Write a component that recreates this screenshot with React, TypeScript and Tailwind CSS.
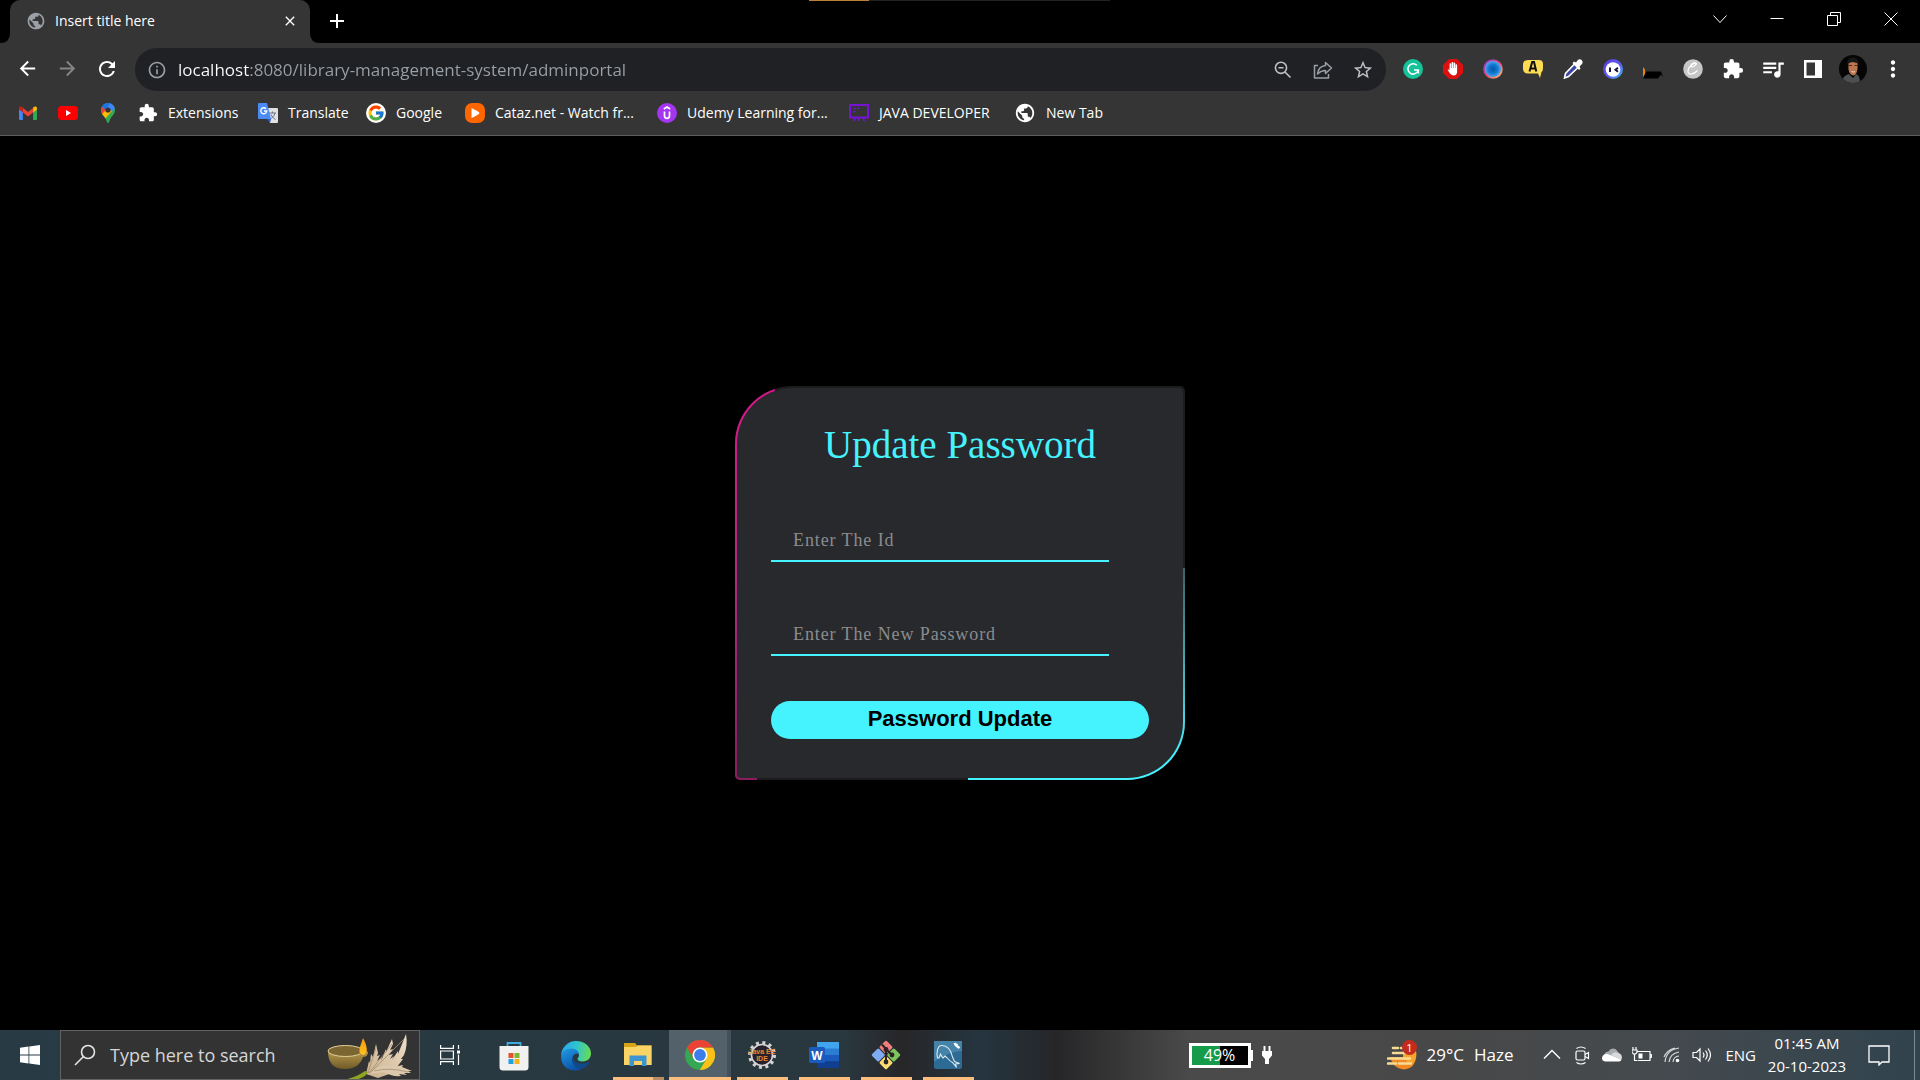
import React from "react";
import { FcGoogle } from "react-icons/fc";
import {
  MdAdd,
  MdArrowBack,
  MdArrowForward,
  MdClose,
  MdExtension,
  MdMoreVert,
  MdOutlineInfo,
  MdPublic,
  MdQueueMusic,
  MdRefresh,
  MdStarBorder,
} from "react-icons/md";

type IconItem = { name: string; icon: React.ReactNode };

/* ---------- browser icons ---------- */

const Gmail = () => (
  <svg viewBox="0 0 20 20" className="size-5">
    <path d="M1 5v11.2q0 .8.9.8h3V8.800z" fill="#4285f4" />
    <path d="M19 5v11.200q0 .8-.9.8h-3V8.800z" fill="#34a853" />
    <path d="M4.900 5 10 9l5.100-4v4.500L10 13.500 4.900 9.500z" fill="#ea4335" />
    <path d="M1 5.500C1 3 3.300 2.900 4.900 4.500v5L1 6.500z" fill="#c5221f" />
    <path d="M19 5.500c0-2.500-2.300-2.600-3.900-1v5L19 6.500z" fill="#fbbc04" />
  </svg>
);

const YouTube = () => (
  <svg viewBox="0 0 20 20" className="size-5">
    <rect y="3" width="20" height="14" rx="3.500" fill="#f00" />
    <path d="M8 7v6l5-3z" fill="#fff" />
  </svg>
);

const Maps = () => (
  <svg viewBox="0 0 20 20" className="size-5">
    <clipPath id="pin">
      <path d="M10 0a7 7 0 0 1 7 7c0 4.500-3.500 5.500-5 9.500-.8 2-1 3.500-2 3.500s-1.200-1.500-2-3.500C6.500 12.500 3 11.500 3 7a7 7 0 0 1 7-7" />
    </clipPath>
    <g clipPath="url(#pin)">
      <path d="M0 0h20v20H0z" fill="#34a853" />
      <path d="M0 4 8 8l8-9H0z" fill="#1a73e8" />
      <path d="M8 6 13-1h7v5l-9 6z" fill="#4285f4" />
      <path d="m0 1 8 6-5 6H0z" fill="#ea4335" />
      <path d="m2 13 7-7 5 2-8 9z" fill="#fbbc04" />
    </g>
    <circle cx="10" cy="7" r="2.600" fill="#333" />
  </svg>
);

const Translate = () => (
  <svg viewBox="0 0 20 20" className="size-5">
    <path d="M8 5h11q1 0 1 1v13q0 1-1 1h-7z" fill="#dfe1e5" />
    <path d="M11 10h7M14.500 8.500V10M17 10c-.5 3-3 5-5 6M13 11.500c1 2.500 3 4 4.500 5" stroke="#6b7480" fill="none" />
    <path d="M1 0h8l4 16H1q-1 0-1-1V1q0-1 1-1" fill="#4c8bf5" />
    <path d="M8 5.700A3 3 0 1 0 8.800 8H6" stroke="#fff" strokeWidth="1.300" fill="none" />
    <path d="m9 16 3 4 1-4z" fill="#2c5cc5" />
  </svg>
);

const Cataz = () => (
  <svg viewBox="0 0 20 20" className="size-5">
    <rect width="20" height="20" rx="7" fill="#f60" />
    <path d="M6.500 5v10q7.500-3.500 8-5-.5-1.500-8-5" fill="#fff" />
  </svg>
);

const Udemy = () => (
  <svg viewBox="0 0 20 20" className="size-5">
    <circle cx="10" cy="10" r="10" fill="#a435f0" />
    <path d="M6.800 6 10 4l3.200 2M7.500 8.500v4.300q0 2.500 2.500 2.500t2.500-2.500V8.500" stroke="#fff" strokeWidth="1.700" fill="none" />
  </svg>
);

const JavaDev = () => (
  <svg viewBox="0 0 20 20" className="size-5" fill="none" stroke="#7514d6">
    <path d="M1 2h18v12.500H1z" strokeWidth="2" />
    <path d="M4.500 5.500h2M8 5.500h2M4.500 8.500h2M6 15l-1.500 3M10 15v3M14 15l1.500 3" strokeWidth="1.600" />
  </svg>
);

const ZoomOut = () => (
  <svg viewBox="0 0 20 20" className="size-5" fill="none" stroke="#bdc1c6" strokeWidth="1.600">
    <circle cx="8" cy="7.800" r="5.600" />
    <path d="M12 12l5.500 5.500M5.500 7.800h5" />
  </svg>
);

const Share = () => (
  <svg viewBox="0 0 20 20" className="size-5" fill="none" stroke="#9aa0a6" strokeWidth="1.500" strokeLinejoin="round">
    <path d="M5 5.500H1.500V18h14v-4" />
    <path d="M12.500 2.500 18.500 8l-6 5.500v-3C9 10.500 7 11.500 4.500 14c.5-5 3.500-8 8-8.500z" />
  </svg>
);

const extensions: IconItem[] = [
  {
    name: "Grammarly",
    icon: (
      <svg viewBox="0 0 20 20" className="size-5">
        <circle cx="10" cy="10" r="10" fill="#15c39a" />
        <path d="M13.800 6.200A5.200 5.200 0 1 0 14.900 12M11 11h4.300v3.500" stroke="#fff" strokeWidth="1.600" fill="none" />
      </svg>
    ),
  },
  {
    name: "AdBlock",
    icon: (
      <svg viewBox="0 0 20 20" className="size-5">
        <path d="M6 0h8l6 6v8l-6 6H6l-6-6V6z" fill="#dc1010" />
        <path d="M7.400 10V5M9.400 9V3.800M11.400 9V4.200M13.300 10V6" stroke="#fff" strokeWidth="1.600" strokeLinecap="round" />
        <path d="M6.600 9h7.500v3.500q0 4-3.500 4-2 0-3.300-1.800L4.600 11q.8-1.300 2 .3z" fill="#fff" />
      </svg>
    ),
  },
  {
    name: "Color ring",
    icon: (
      <svg viewBox="0 0 20 20" className="size-5">
        <defs>
          <linearGradient id="ring" x1="0" y1="0" x2="1" y2="1">
            <stop stopColor="#7a45e8" />
            <stop offset=".5" stopColor="#ee3f76" />
            <stop offset="1" stopColor="#ffd25e" />
          </linearGradient>
          <radialGradient id="lens">
            <stop stopColor="#0757a8" />
            <stop offset=".6" stopColor="#127bd3" />
            <stop offset="1" stopColor="#55a9ef" />
          </radialGradient>
        </defs>
        <circle cx="10" cy="10" r="9.800" fill="url(#ring)" />
        <circle cx="10" cy="10" r="8" fill="url(#lens)" />
      </svg>
    ),
  },
  {
    name: "Annotate",
    icon: (
      <svg viewBox="0 0 20 20" className="size-5">
        <path d="M5 1h11q4 0 4 4v4q0 3-1.500 4L17 19l-2-4.500H5q-5 0-5-5V6q0-5 5-5" fill="#fbdc52" />
        <path d="m6.500 12.500 2.700-9.500h1.800l2.300 9.500M7.800 9.600h4.400" stroke="#111" strokeWidth="2" fill="none" />
      </svg>
    ),
  },
  {
    name: "Color picker",
    icon: (
      <svg viewBox="0 0 20 20" className="size-5">
        <path d="M11.500 5 2.500 14.500 1.500 19l4-1.500L15 8.500z" fill="#3b46a8" stroke="#fff" strokeWidth="1.600" />
        <path d="m9.500 4 1.500-1.500 2 1L15 .8q2.500-1.300 4 .8 1.300 1.800 0 3.400L16.500 7.500l1 2L16 11z" fill="#fff" />
      </svg>
    ),
  },
  {
    name: "Assistant",
    icon: (
      <svg viewBox="0 0 20 20" className="size-5">
        <defs>
          <linearGradient id="bot" x1="0" y1="0" x2="1" y2="1">
            <stop stopColor="#5b35d5" />
            <stop offset=".6" stopColor="#5a62f3" />
            <stop offset="1" stopColor="#3fd0f0" />
          </linearGradient>
        </defs>
        <circle cx="10" cy="10" r="10" fill="url(#bot)" />
        <circle cx="10" cy="10.500" r="7.300" fill="#fff" />
        <path d="M7 8.500v4.500M15 8.800l-2.500 2 2.500 2" stroke="#151540" strokeWidth="2" fill="none" />
      </svg>
    ),
  },
  {
    name: "Cap",
    icon: (
      <svg viewBox="0 0 20 20" className="size-5">
        <path d="m0 8 2 2.500v4L0 19z" fill="#e8870f" />
        <path d="M0 19 3.500 12.500H18l2.500 6-2.500-3-3 4H1z" fill="#000" />
      </svg>
    ),
  },
  {
    name: "Script C",
    icon: (
      <svg viewBox="0 0 20 20" className="size-5">
        <circle cx="10" cy="10" r="9.800" fill="#c6c6c6" />
        <path d="M8 7.500C10 9 13 6 13.500 4.500 12 3.500 5 7 5 12.500c0 4 6 3 9.500-1M8 7.500c-1-1 1-3.500 4.500-3.800" stroke="#fff" strokeWidth="1.200" fill="none" />
      </svg>
    ),
  },
  { name: "Extensions", icon: <MdExtension className="size-[22px] text-white" /> },
  { name: "Media controls", icon: <MdQueueMusic className="size-[26px] text-white" /> },
  {
    name: "Side panel",
    icon: (
      <svg viewBox="0 0 20 20" className="size-5">
        <path d="M1 1h18v18H1zm2.500 2.500v13H12v-13z" fill="#fff" fillRule="evenodd" />
      </svg>
    ),
  },
  {
    name: "Profile",
    icon: (
      <svg viewBox="0 0 28 28" className="size-7">
        <clipPath id="face">
          <circle cx="14" cy="14" r="14" />
        </clipPath>
        <g clipPath="url(#face)">
          <path d="M0 0h28v28H0z" fill="#050505" />
          <path d="M3 28c0-5 3-8 7-9l4 4 3-4c3 1 4 4 4 9z" fill="#4c5050" />
          <path d="M9.500 8q4.500-3 9 0v6q-1 6-4 6.500-4-.5-5-6z" fill="#b9764f" />
          <path d="M8.500 11Q7 3 14 2.500q7 .5 5.500 8.500l-1-3-5-1-4 1z" fill="#17181a" />
          <path d="M10 10.500h3M15.500 10.500h3" stroke="#4a2b1c" strokeWidth="1.200" />
          <path d="M12.500 16.500q2 1.200 3.500 0" stroke="#f3ddd0" fill="none" />
        </g>
      </svg>
    ),
  },
  { name: "Menu", icon: <MdMoreVert className="size-[26px] text-white" /> },
];

const bookmarks = [
  { icon: <Gmail />, name: "Gmail" },
  { icon: <YouTube />, name: "YouTube" },
  { icon: <Maps />, name: "Maps" },
  { icon: <MdExtension className="size-5 text-white" />, label: "Extensions", width: "w-[70px]" },
  { icon: <Translate />, label: "Translate", width: "w-[58px]" },
  { icon: <FcGoogle className="size-5 rounded-full bg-white p-px" />, label: "Google", width: "w-[49px]" },
  { icon: <Cataz />, label: "Cataz.net - Watch fr...", width: "w-[142px]" },
  { icon: <Udemy />, label: "Udemy Learning for...", width: "w-[142px]" },
  { icon: <JavaDev />, label: "JAVA DEVELOPER", width: "w-[115px]" },
  { icon: <MdPublic className="size-[22px] text-white" />, label: "New Tab", width: "w-[57px]" },
];

const windowControls: IconItem[] = [
  { name: "Search tabs", icon: <path d="m1.500 4.500 6.500 7 6.500-7" /> },
  { name: "Minimize", icon: <path d="M1.500 7.500h13" /> },
  { name: "Restore", icon: <path d="M1.500 4.500h10v10h-10zM4.500 4.500v-3h10v10h-3" /> },
  { name: "Close", icon: <path d="m1.500 1.500 13 13m0-13-13 13" /> },
];

/* ---------- taskbar icons ---------- */

const Store = () => (
  <svg viewBox="0 0 30 30" className="size-[30px]">
    <path d="M8.500 7V2h13v5" fill="none" stroke="#3fa9de" strokeWidth="1.800" />
    <path d="M.500 5h29v21q0 3.500-3.500 3.500H4Q.5 29.500.5 26z" fill="#f1f1f1" />
    <path d="M9.500 12H14.500v5h-5z" fill="#e8502a" />
    <path d="M15.500 12h5v5h-5z" fill="#7db928" />
    <path d="M9.500 18h5v5h-5z" fill="#22a0e6" />
    <path d="M15.500 18h5v5h-5z" fill="#f8b31c" />
  </svg>
);

const Edge = () => (
  <svg viewBox="0 0 30 30" className="size-[30px]">
    <defs>
      <linearGradient id="edgeA" x1="0" y1=".3" x2="1" y2=".4">
        <stop stopColor="#2aa5e8" />
        <stop offset=".5" stopColor="#2fc3cf" />
        <stop offset="1" stopColor="#66dd55" />
      </linearGradient>
      <linearGradient id="edgeB" x1="0" y1="0" x2=".5" y2="1">
        <stop stopColor="#1f9ae6" />
        <stop offset="1" stopColor="#0b54a8" />
      </linearGradient>
    </defs>
    <path d="M0 15A15 15 0 0 1 15 0c9 0 15 6 15 12.500 0 5-4 8-8.500 8-3.500 0-5-1.500-5-2.500s1.500-1.500 1.500-4c0-3-3-5.500-7-5.500C6 8.500 1.500 10 0 15" fill="url(#edgeA)" />
    <path d="M0 15c.5-4.500 5-7.500 10.500-7.500 4.500 0 7.500 3 7.500 6.500-1.500-2.500-6.500-1.500-6.500 4 0 6 6 9.500 10 9.500C13 32 0 29 0 15" fill="url(#edgeB)" />
    <path d="M11.500 16c-2.500 8 6 14 10 11.500 3-1 5.500-3 6.800-5.500.3-.8-.3-1-.8-.7-6 3-15 1-16-5.300" fill="#114a8b" />
  </svg>
);

const Explorer = () => (
  <svg viewBox="0 0 30 30" className="size-[30px]">
    <path d="M1 3h11l2 2.500h14.500V25H1z" fill="#d9a317" />
    <path d="M1 7h12l1.500-1.500h14V25H1z" fill="#fbd466" />
    <path d="M6.500 26V15.500h17V26h-4.500v-5h-8v5z" fill="#3d94cf" />
  </svg>
);

const Chrome = () => (
  <svg viewBox="0 0 30 30" className="size-[30px]">
    <circle cx="15" cy="15" r="15" fill="#34a853" />
    <path d="M15 7.500h13A15 15 0 0 1 14.800 30l6.700-11.200z" fill="#fbc116" />
    <path d="M2 7.500a15 15 0 0 1 26 0H15a7.500 7.500 0 0 0-6.500 11.200z" fill="#ea4335" />
    <circle cx="15" cy="15" r="7.500" fill="#fff" />
    <circle cx="15" cy="15" r="5.900" fill="#3b7de9" />
  </svg>
);

const Eclipse = () => (
  <svg viewBox="0 0 30 30" className="size-[30px]">
    <circle cx="15" cy="15" r="12.500" fill="none" stroke="#d5d5d5" strokeWidth="3" strokeDasharray="3 3.545" />
    <circle cx="15" cy="15" r="10.500" fill="#29202e" stroke="#d5d5d5" strokeWidth="1.600" />
    <text x="15" y="14" textAnchor="middle" fontSize="7" fontWeight="700" fill="#e8882c" fontFamily="Liberation Sans, sans-serif">Java EE</text>
    <text x="15" y="20.500" textAnchor="middle" fontSize="7" fontWeight="700" fill="#e8882c" fontFamily="Liberation Sans, sans-serif">IDE</text>
  </svg>
);

const Word = () => (
  <svg viewBox="0 0 30 30" className="size-[30px]">
    <path d="M8 2h22v7H8z" fill="#41a5ee" />
    <path d="M8 8.500h22V15H8z" fill="#2b7cd3" />
    <path d="M8 15h22v6.500H8z" fill="#185abd" />
    <path d="M8 21.500h22V28H8z" fill="#103f91" />
    <rect y="7" width="16" height="16" rx="1.500" fill="#1a5bbd" />
    <text x="8" y="19.500" textAnchor="middle" fontSize="12" fontWeight="700" fill="#fff" fontFamily="Liberation Sans, sans-serif">W</text>
  </svg>
);

const Git = () => (
  <svg viewBox="0 0 30 30" className="size-[30px]">
    <g transform="rotate(45 15 15)">
      <rect x="4.500" y="4.500" width="10" height="10" rx="1.500" fill="#f07c7c" />
      <rect x="15.500" y="4.500" width="10" height="10" rx="1.500" fill="#7cc65c" />
      <rect x="4.500" y="15.500" width="10" height="10" rx="1.500" fill="#7fabf0" />
      <rect x="15.500" y="15.500" width="10" height="10" rx="1.500" fill="#fbdc74" />
    </g>
    <path d="M11 4.500 15 9v13M15 9l6 6" stroke="#2a2226" strokeWidth="2" fill="none" />
    <circle cx="15" cy="9.500" r="2.400" fill="#2a2226" />
    <circle cx="21" cy="15" r="2.400" fill="#2a2226" />
    <circle cx="15" cy="22" r="2.400" fill="#2a2226" />
  </svg>
);

const MySql = () => (
  <svg viewBox="0 0 30 30" className="size-[30px]">
    <rect x="1" y="1" width="28" height="28" rx="2" fill="#2d6a94" />
    <path d="M1 1h28v10Q14 12 1 22z" fill="#4683a8" />
    <path d="M4.500 18C3 12 5 6 8 5.500c7-.5 10 5 11.500 11.500l2 4.500 5 2-4 .5 1 3.500-4-5c-4-2-5-5-7.500-6.500L10 18c-1.500-1-2-3-2.500-4L6 18z" fill="none" stroke="#d9e8f0" strokeWidth="1.100" />
    <path d="m21.500 3 1.500 2.500 3.500 2.500M22 6l2.500-2" stroke="#fff" strokeWidth="2.200" />
  </svg>
);

const apps: { name: string; icon: React.ReactNode; state?: "open" | "active" | "group" }[] = [
  { name: "Microsoft Store", icon: <Store /> },
  { name: "Microsoft Edge", icon: <Edge /> },
  { name: "File Explorer", icon: <Explorer />, state: "group" },
  { name: "Google Chrome", icon: <Chrome />, state: "active" },
  { name: "Eclipse", icon: <Eclipse />, state: "open" },
  { name: "Word", icon: <Word />, state: "open" },
  { name: "Git", icon: <Git />, state: "open" },
  { name: "MySQL Workbench", icon: <MySql />, state: "open" },
];

const SearchArt = () => (
  <svg viewBox="0 0 88 48" className="mr-[5px] h-12 w-[88px]">
    <defs>
      <linearGradient id="bowl" x1="0" y1="0" x2="0" y2="1">
        <stop stopColor="#b89a4e" />
        <stop offset="1" stopColor="#6f5a27" />
      </linearGradient>
      <linearGradient id="flame" x1="0" y1="0" x2="0" y2="1">
        <stop stopColor="#f59a10" />
        <stop offset="1" stopColor="#ffc21c" />
      </linearGradient>
      <linearGradient id="husk" x1="1" y1="0" x2="0" y2="1">
        <stop stopColor="#efdfc8" />
        <stop offset="1" stopColor="#c9b08c" />
      </linearGradient>
    </defs>
    <path d="M2 20q0 18 17 18 14 0 18-12 5 0 5-5-3-1-8-1z" fill="url(#bowl)" />
    <ellipse cx="19.500" cy="20" rx="17.500" ry="5.500" fill="#7b6631" stroke="#e2d19a" />
    <path d="M34 19q5 1 8 1.500l-4 3.500-5-1z" fill="#a98c45" />
    <path d="M37 7q7 13 1 17-6 0-4-8z" fill="url(#flame)" />
    <path d="m40 43 3-13 1 2 1-9 2 3 3-13 2 9-1 3 3-1-3 6 5-4-1 4 5-12 0 3 6-13 1 5-3 6 3-1-4 6 4-1-3 5 4-3-2 4 6-9 0 3 8-20q2 12-2 21l-3 4 2 0-6 8 3 0-8 6-14 5z" fill="url(#husk)" />
    <path d="M51 37q8-5 15-2l1-1 5 1 5-1-1 2 10 4-4 0 3 2-7 0 3 2-8-1 2 2q-9 1-17-4-8 1-15 2z" fill="#dcc8ab" />
    <path d="m42 42 8-25M43 42 66 13M44 42 78 8M48 40q15-4 34 1" stroke="#a58f73" strokeWidth=".8" fill="none" />
    <path d="M17 49q12-2 22-9l3 1-3 4q-8 4-12 5z" fill="#8fa51f" />
  </svg>
);

const TrayIcon = ({ name, children, box = "0 0 20 20" }: { name: string; children: React.ReactNode; box?: string }) => (
  <button aria-label={name} className="flex h-full w-[30px] items-center justify-center">
    <svg viewBox={box} className="size-5" fill="none" stroke="#fff" strokeWidth="1.200">
      {children}
    </svg>
  </button>
);

/* ---------- sections ---------- */

function TabStrip() {
  return (
    <div className="relative flex h-[43px] items-stretch bg-black pl-[10px]">
      <div className="absolute left-[809px] top-0 flex h-px w-[301px] bg-[#222]">
        <span className="w-[60px] bg-[#b98136]" />
      </div>
      <div className="relative flex w-[300px] items-center rounded-t-[10px] bg-[#353535] pb-0.5 pl-4 pr-3">
        <svg viewBox="0 0 10 10" className="absolute -left-[10px] bottom-0 size-[10px]">
          <path d="M10 0v10H0Q10 10 10 0" fill="#353535" />
        </svg>
        <svg viewBox="0 0 10 10" className="absolute -right-[10px] bottom-0 size-[10px]">
          <path d="M0 0v10h10Q0 10 0 0" fill="#353535" />
        </svg>
        <MdPublic className="size-5 text-[#9aa0a6]" />
        <span className="ml-[9px] flex-1 text-sm text-white">Insert title here</span>
        <button aria-label="Close tab">
          <MdClose className="size-4 text-white" />
        </button>
      </div>
      <button aria-label="New tab" className="ml-[15px] pb-0.5">
        <MdAdd className="size-6 text-white" />
      </button>
      <div className="ml-auto flex h-[38px] pr-px">
        {windowControls.map((c) => (
          <button key={c.name} aria-label={c.name} className="flex w-[57px] items-center justify-center">
            <svg viewBox="0 0 16 16" className="size-4" fill="none" stroke="#fff" strokeWidth="1">
              {c.icon}
            </svg>
          </button>
        ))}
      </div>
    </div>
  );
}

function Toolbar() {
  return (
    <div className="flex items-center bg-[#353535] px-[7px] pt-[5px]">
      <button aria-label="Back" className="flex w-10 justify-center pb-0.5">
        <MdArrowBack className="size-[23px] text-white" />
      </button>
      <button aria-label="Forward" className="flex w-10 justify-center pb-0.5">
        <MdArrowForward className="size-[23px] text-[#868686]" />
      </button>
      <button aria-label="Reload" className="flex w-10 justify-center pb-0.5">
        <MdRefresh className="size-6 text-white" />
      </button>
      <div className="ml-2 flex h-[43px] flex-1 items-center rounded-full bg-[#202124] pl-3 pr-[3px]">
        <MdOutlineInfo className="size-5 text-[#9aa0a6]" />
        <input
          type="text"
          aria-label="Address"
          defaultValue="localhost:8080/library-management-system/adminportal"
          className="ml-[11px] h-full w-0 flex-1 bg-[linear-gradient(90deg,#fff_72px,#9aa0a6_72px)] bg-clip-text text-[17px] text-transparent outline-none"
        />
        <button aria-label="Zoom" className="flex w-10 justify-center">
          <ZoomOut />
        </button>
        <button aria-label="Share" className="flex w-10 justify-center">
          <Share />
        </button>
        <button aria-label="Bookmark" className="flex w-10 justify-center">
          <MdStarBorder className="size-[22px] text-[#bdc1c6]" />
        </button>
      </div>
      <div className="ml-[7px] flex items-center pb-0.5">
        {extensions.map((e) => (
          <button key={e.name} aria-label={e.name} className="flex w-10 items-center justify-center">
            {e.icon}
          </button>
        ))}
      </div>
    </div>
  );
}

function BookmarkBar() {
  return (
    <nav className="flex h-[45px] items-center gap-5 border-b border-[#5c5c5c] bg-[#353535] pb-px pl-[18px]">
      {bookmarks.map((b) => (
        <a key={b.label ?? b.name} href="#" aria-label={b.name} className="flex items-center gap-[10px] whitespace-nowrap text-sm text-white">
          {b.icon}
          {b.label && <span className={b.width}>{b.label}</span>}
        </a>
      ))}
    </nav>
  );
}

function UpdateCard() {
  const field =
    "h-11 w-[338px] border-b-2 border-[#45f3ff] bg-transparent px-[22px] pt-0.5 text-lg tracking-wider text-white outline-none placeholder:text-[#8b8c8e]";
  return (
    <div className="relative w-[450px] overflow-hidden rounded-[58px_5px_58px_5px] bg-[#1c1c1c] p-0.5">
      <div className="absolute inset-y-0 left-0 w-10 bg-linear-to-b from-[#d9138a] via-[#b02a80] to-[#8a1c60] [clip-path:polygon(0_0,100%_0,55%_100%,0_100%)]" />
      <div className="absolute bottom-0 right-0 h-[212px] w-[217px] bg-linear-to-b from-[#3b6468] to-[#45f3ff] to-90%" />
      <form
        className="relative rounded-[56px_4px_56px_4px] bg-[#28292d] px-[34px] pb-[39px] pt-[35px] font-['Liberation_Serif',serif]"
        onSubmit={(e) => e.preventDefault()}
      >
        <h2 className="text-center text-[39px] leading-[44px] text-[#45f3ff]">Update Password</h2>
        <div className="mt-[51px]">
          <input aria-label="Enter The Id" type="text" placeholder="Enter The Id" className={field} />
        </div>
        <div className="mt-[50px]">
          <input aria-label="Enter The New Password" type="password" placeholder="Enter The New Password" className={field} />
        </div>
        <button type="submit" className="mt-[45px] h-[38px] w-full rounded-full bg-[#45f3ff] pb-0.5 font-['Liberation_Sans',sans-serif] text-[22px] font-bold leading-none text-black">
          Password Update
        </button>
      </form>
    </div>
  );
}

function Taskbar() {
  return (
    <footer className="flex h-[50px] items-stretch bg-[linear-gradient(90deg,#283b45_0%,#29373e_44%,#272628_47%,#253540_51%,#262628_55%,#4a4a4a_62%,#484848_75%,#444a4e_87%,#31434e_100%)] text-white">
      <button aria-label="Start" className="flex w-[60px] items-center justify-center">
        <svg viewBox="0 0 20 20" className="size-5" fill="#fff">
          <path d="m0 2.800 8.500-1.200v8H0zM9.300 1.500 20 0v9.600H9.300zM0 10.400h8.500v8L0 17.200zM9.300 10.400H20V20L9.300 18.500z" />
        </svg>
      </button>
      <label className="flex w-[360px] items-center border border-[#626262] bg-[#333] pl-3">
        <svg viewBox="0 0 24 24" className="size-6" fill="none" stroke="#e6e6e6" strokeWidth="1.600">
          <circle cx="15" cy="9" r="6.500" />
          <path d="M10.500 13.500 2 22" />
        </svg>
        <input
          type="text"
          aria-label="Type here to search"
          placeholder="Type here to search"
          className="ml-[13px] w-0 flex-1 bg-transparent text-lg outline-none placeholder:text-[#d6d6d6]"
        />
        <SearchArt />
      </label>
      <button aria-label="Task view" className="mr-[3px] flex w-[60px] items-center justify-center">
        <svg viewBox="0 0 20 20" className="size-5" fill="none" stroke="#fff" strokeWidth="1.200">
          <path d="M.6 0v3.400h12.800V0M.6 6h12.800v8H.6zM.6 20v-3.400h12.800V20M18.500 0v4M18.500 9.500V20" />
          <path d="M17 5.500h3v3h-3z" fill="#fff" stroke="none" />
        </svg>
      </button>
      {apps.map((a) => (
        <button key={a.name} aria-label={a.name} className="flex w-[62px] flex-col items-center">
          {a.state === "active" ? (
            <span className="flex h-full w-full flex-col items-center">
              <span className="flex w-full flex-1 border-r-4 border-[#45515a] bg-[#53616a]">
                <span className="m-auto pl-1 pt-0.5">{a.icon}</span>
              </span>
              <span className="h-[3px] w-full bg-[#fdbd7d]" />
            </span>
          ) : (
            <>
              <span className="flex flex-1 items-center pt-0.5">{a.icon}</span>
              {a.state && (
                <span className="flex h-[3px] w-[51px] justify-end bg-[#fdbd7d]">
                  {a.state === "group" && <span className="w-[11px] bg-[#b98d66]" />}
                </span>
              )}
            </>
          )}
        </button>
      ))}
      <div className="ml-auto flex items-center">
        <div className="flex items-center">
          <span className="flex h-[25px] w-[62px] items-center justify-center border-[3px] border-white bg-linear-to-r from-[#169b4b] from-50% to-black to-50% text-base leading-none">
            49%
          </span>
          <span className="h-[11px] w-0.5 bg-white" />
          <svg viewBox="0 0 12 20" className="ml-2 h-5 w-3" fill="#fff">
            <path d="M2.500 1h2v5h3V1h2v5H11v4.500L8 14v5H4v-5L1 10.500V6h1.500z" />
          </svg>
        </div>
        <button className="ml-[114px] flex items-center text-[17px]">
          <svg viewBox="0 0 30 30" className="size-[30px]">
            <path d="M3 17h26q-1 12-13 12.500Q6 28 3 17" fill="#f08a24" />
            <path d="M16 11h13q2 10-6 14l-7-8z" fill="#f8a52b" />
            <path d="M6 8h5M14 8h4M6 13h12M1 18.500h22M1 23.500h8M12 23.500h12" stroke="#f8dc94" strokeWidth="2.600" strokeLinecap="round" />
            <circle cx="22.500" cy="7.500" r="7.500" fill="#c42b1c" />
            <text x="22.500" y="11.500" textAnchor="middle" fontSize="11" fill="#fff">1</text>
          </svg>
          <span className="ml-[10px]">29°C</span>
          <span className="ml-[10px]">Haze</span>
        </button>
        <div className="ml-6 flex h-full items-center">
          <TrayIcon name="Hidden icons">
            <path d="m2 13.500 8-8 8 8" strokeWidth="1.400" />
          </TrayIcon>
          <TrayIcon name="Meet now">
            <rect x="4" y="6" width="9" height="9" rx="1.500" />
            <path d="m13 9.500 3.500-2v6l-3.500-2M4.500 3.500Q9 .5 13.500 3.500M4.500 17.500q4.500 3 9 0" />
          </TrayIcon>
          <TrayIcon name="OneDrive">
            <path d="M2 11q0-4 4.500-4.500Q9 2 13.500 4L17 8l-9 4z" fill="#a9abad" stroke="none" />
            <path d="M3 16.500q-3-.5-3-3.500.5-4 5-4l9 3 5.500 2.500q-.5 2-2.500 2z" fill="#fff" stroke="none" />
            <path d="M9 10q3-4 7-2 4 .5 4 5l-1 2z" fill="#d8d9da" stroke="none" />
          </TrayIcon>
          <TrayIcon name="Battery">
            <path d="M5 6.500h13v9H5.500M19.300 9v4M1 2v3M4 2v3M0 5h5v2.500L3.500 9h-2L0 7.500zM2.500 9v6.500H5" />
            <path d="M6.500 8.500h4v5h-4z" fill="#fff" stroke="none" />
          </TrayIcon>
          <TrayIcon name="Wi-Fi">
            <path d="M3 17Q4 5 17 3M7 17Q8 8.500 17 7M11 17q.500-5.500 6-6M2 12Q5 5 13 3" stroke="#d5d8da" />
            <circle cx="15.500" cy="15.500" r="1.800" fill="#fff" stroke="none" />
          </TrayIcon>
          <TrayIcon name="Volume">
            <path d="M1 7.500h3.500L8 4v12l-3.500-3.500H1zM11 7.500q2 2.500 0 5M13.500 5.500q3.500 4.500 0 9M16 3.500q5 6.500 0 13" />
          </TrayIcon>
          <button className="ml-2 text-[15px]">ENG</button>
        </div>
        <button className="ml-2 flex w-[86px] flex-col items-center text-[15px] leading-[23px]">
          <span>01:45 AM</span>
          <span className="whitespace-nowrap">20-10-2023</span>
        </button>
        <button aria-label="Notifications" className="ml-1 flex w-[50px] justify-center">
          <svg viewBox="0 0 22 22" className="size-[22px]" fill="none" stroke="#fff" strokeWidth="1.300">
            <path d="M1 2h20v16h-7l-3 3v-3H1z" />
          </svg>
        </button>
        <span className="ml-[10px] h-full w-[6px] border-l border-[#7d888e]" />
      </div>
    </footer>
  );
}

export default function App() {
  return (
    <div className="flex min-h-screen flex-col bg-black font-['Open_Sans',sans-serif]">
      <header>
        <TabStrip />
        <Toolbar />
        <BookmarkBar />
      </header>
      <main className="grid flex-1 place-items-center">
        <UpdateCard />
      </main>
      <Taskbar />
    </div>
  );
}
